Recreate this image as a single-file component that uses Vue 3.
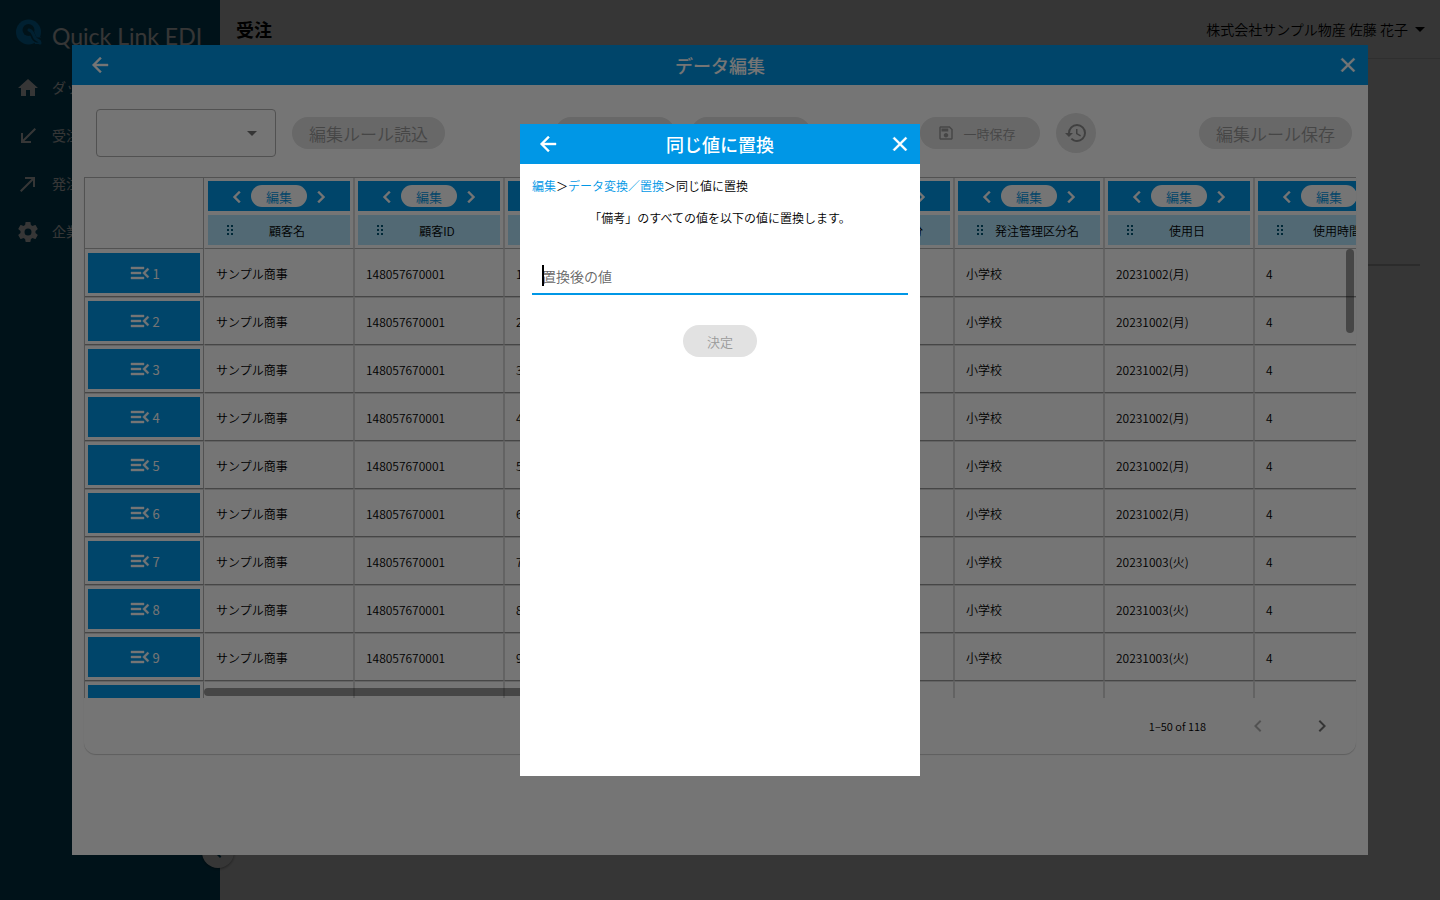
<script setup>
import { ref, computed, onMounted } from 'vue'

// サイドメニュー
const menuItems = [
  { label: 'ダッシュボード', icon: 'M10,20V14H14V20H19V12H22L12,3L2,12H5V20H10Z' },
  { label: '受注', icon: 'M20,5.41L18.59,4L7,15.59V9H5V19H15V17H8.41L20,5.41Z' },
  { label: '発注', icon: 'M9,5V7H15.59L4,18.59L5.41,20L17,8.41V15H19V5H9Z' },
  {
    label: '企業設定',
    icon: 'M12,15.5A3.5,3.5 0 0,1 8.5,12A3.5,3.5 0 0,1 12,8.5A3.5,3.5 0 0,1 15.5,12A3.5,3.5 0 0,1 12,15.5M19.43,12.97C19.47,12.65 19.5,12.33 19.5,12C19.5,11.67 19.47,11.34 19.43,11L21.54,9.37C21.73,9.22 21.78,8.95 21.66,8.73L19.66,5.27C19.54,5.05 19.27,4.96 19.05,5.05L16.56,6.05C16.04,5.66 15.5,5.32 14.87,5.07L14.5,2.42C14.46,2.18 14.25,2 14,2H10C9.75,2 9.54,2.18 9.5,2.42L9.13,5.07C8.5,5.32 7.96,5.66 7.44,6.05L4.95,5.05C4.73,4.96 4.46,5.05 4.34,5.27L2.34,8.73C2.21,8.95 2.27,9.22 2.46,9.37L4.57,11C4.53,11.34 4.5,11.67 4.5,12C4.5,12.33 4.53,12.65 4.57,12.97L2.46,14.63C2.27,14.78 2.21,15.05 2.34,15.27L4.34,18.73C4.46,18.95 4.73,19.03 4.95,18.95L7.44,17.94C7.96,18.34 8.5,18.68 9.13,18.93L9.5,21.58C9.54,21.82 9.75,22 10,22H14C14.25,22 14.46,21.82 14.5,21.58L14.87,18.93C15.5,18.67 16.04,18.34 16.56,17.94L19.05,18.95C19.27,19.03 19.54,18.95 19.66,18.73L21.66,15.27C21.78,15.05 21.73,14.78 21.54,14.63L19.43,12.97Z'
  }
]

// アイコン
const icons = {
  back: 'M20,11V13H8L13.5,18.5L12.08,19.92L4.16,12L12.08,4.08L13.5,5.5L8,11H20Z',
  close: 'M19,6.41L17.59,5L12,10.59L6.41,5L5,6.41L10.59,12L5,17.59L6.41,19L12,13.41L17.59,19L19,17.59L13.41,12L19,6.41Z',
  left: 'M15.41,16.58L10.83,12L15.41,7.41L14,6L8,12L14,18L15.41,16.58Z',
  right: 'M8.59,16.58L13.17,12L8.59,7.41L10,6L16,12L10,18L8.59,16.58Z',
  down: 'M7,10L12,15L17,10H7Z',
  rowMenu: 'M21,15.61L19.59,17L14.58,12L19.59,7L21,8.39L17.44,12L21,15.61M3,6H16V8H3V6M3,13V11H13V13H3M3,18V16H16V18H3Z',
  save: 'M17 3H5C3.89 3 3 3.9 3 5V19C3 20.1 3.89 21 5 21H19C20.1 21 21 20.1 21 19V7L17 3M19 19H5V5H16.17L19 7.83V19M12 12C10.34 12 9 13.34 9 15S10.34 18 12 18 15 16.66 15 15 13.66 12 12 12M6 6H15V10H6V6Z',
  history: 'M13.5,8H12V13L16.28,15.54L17,14.33L13.5,12.25V8M13,3A9,9 0 0,0 4,12H1L4.96,16.03L9,12H6A7,7 0 0,1 13,5A7,7 0 0,1 20,12A7,7 0 0,1 13,19C11.07,19 9.32,18.21 8.06,16.94L6.64,18.36C8.27,20 10.5,21 13,21A9,9 0 0,0 22,12A9,9 0 0,0 13,3'
}

const columns = ['顧客名', '顧客ID', '明細番号', '備考', '発注管理区分', '発注管理区分名', '使用日', '使用時間']

// 表示する行
const rows = Array.from({ length: 10 }, (_, i) => ({
  no: i + 1,
  cells: ['サンプル商事', '148057670001', String(i + 1), '', '1', '小学校', i < 6 ? '20231002(月)' : '20231003(火)', '4']
}))

const selectedRule = ref('')
const replaceValue = ref('')
const replaceInput = ref(null)
const canSubmit = computed(() => replaceValue.value !== '')

onMounted(() => {
  replaceInput.value.focus()
})
</script>

<template>
  <div class="app">
    <!-- サイドバー -->
    <aside class="sidebar">
      <div class="brand">
        <svg class="brand-mark" viewBox="0 0 28 28">
          <circle class="mark-fill" cx="12.5" cy="14" r="12.5" />
          <path class="mark-fill" d="M17,20L25,19V26H19Z" />
          <circle class="mark-cut" cx="12.5" cy="12" r="6" />
          <path class="mark-cut-line" d="M14,13C18,15 16,21 21,22L27,22" />
          <path class="mark-line" d="M13,12C18,13 17,19 20,21C22,23 24,22 24,25" />
        </svg>
        <span class="brand-name">Quick Link EDI</span>
      </div>
      <nav class="menu">
        <a v-for="item in menuItems" :key="item.label" href="#" class="menu-link">
          <svg class="icon" viewBox="0 0 24 24"><path :d="item.icon" /></svg>
          <span class="menu-label">{{ item.label }}</span>
        </a>
      </nav>
      <button class="collapse-btn" aria-label="メニューを閉じる">
        <svg class="icon" viewBox="0 0 24 24"><path :d="icons.left" /></svg>
      </button>
    </aside>

    <main class="main">
      <header class="main-header">
        <h1 class="page-title">受注</h1>
        <button class="user-btn">
          株式会社サンプル物産 佐藤 花子
          <svg class="icon" viewBox="0 0 24 24"><path :d="icons.down" /></svg>
        </button>
      </header>
      <div class="main-body"></div>
    </main>
  </div>

  <!-- データ編集ダイアログ -->
  <div class="overlay">
    <section class="dialog edit-dialog">
      <header class="dialog-bar">
        <button class="bar-btn" aria-label="戻る">
          <svg class="icon bold" viewBox="0 0 24 24"><path :d="icons.back" /></svg>
        </button>
        <h2 class="dialog-title">データ編集</h2>
        <button class="bar-btn" aria-label="閉じる">
          <svg class="icon bold" viewBox="0 0 24 24"><path :d="icons.close" /></svg>
        </button>
      </header>

      <div class="toolbar">
        <div class="select-wrap">
          <select v-model="selectedRule" class="rule-select" aria-label="編集ルール">
            <option value=""></option>
          </select>
          <svg class="icon select-arrow" viewBox="0 0 24 24"><path :d="icons.down" /></svg>
        </div>
        <button class="pill large" disabled>編集ルール読込</button>
        <div class="tool-group">
          <div class="tool-pair">
            <button class="pill" disabled>元に戻す</button>
            <button class="pill" disabled>やり直す</button>
          </div>
          <div class="tool-pair">
            <button class="pill with-icon" disabled>
              <svg class="icon small" viewBox="0 0 24 24"><path :d="icons.save" /></svg>
              一時保存
            </button>
            <button class="history-btn" aria-label="履歴" disabled>
              <svg class="icon" viewBox="0 0 24 24"><path :d="icons.history" /></svg>
            </button>
          </div>
        </div>
        <button class="pill large" disabled>編集ルール保存</button>
      </div>

      <div class="table-card">
        <div class="table-scroll">
          <table class="grid">
            <thead>
              <tr>
                <th class="corner"></th>
                <th v-for="col in columns" :key="col">
                  <div class="col-tools">
                    <button class="col-btn" aria-label="左へ移動">
                      <svg class="icon bold" viewBox="0 0 24 24"><path :d="icons.left" /></svg>
                    </button>
                    <button class="col-edit">編集</button>
                    <button class="col-btn" aria-label="右へ移動">
                      <svg class="icon bold" viewBox="0 0 24 24"><path :d="icons.right" /></svg>
                    </button>
                  </div>
                  <div class="col-name">
                    <svg class="drag" viewBox="0 0 6 10">
                      <path d="M0,0h2v2h-2zM4,0h2v2h-2zM0,4h2v2h-2zM4,4h2v2h-2zM0,8h2v2h-2zM4,8h2v2h-2z" />
                    </svg>
                    <span class="col-label">{{ col }}</span>
                  </div>
                </th>
              </tr>
            </thead>
            <tbody>
              <tr v-for="row in rows" :key="row.no">
                <td class="row-head">
                  <button class="row-btn">
                    <svg class="icon bold" viewBox="0 0 24 24"><path :d="icons.rowMenu" /></svg>
                    {{ row.no }}
                  </button>
                </td>
                <td v-for="(cell, i) in row.cells" :key="i">{{ cell }}</td>
              </tr>
            </tbody>
          </table>
          <div class="thumb-v"></div>
          <div class="thumb-h"></div>
        </div>
        <footer class="pager">
          <span>1–50 of 118</span>
          <button class="page-btn" aria-label="前のページ" disabled>
            <svg class="icon" viewBox="0 0 24 24"><path :d="icons.left" /></svg>
          </button>
          <button class="page-btn" aria-label="次のページ">
            <svg class="icon" viewBox="0 0 24 24"><path :d="icons.right" /></svg>
          </button>
        </footer>
      </div>
    </section>
  </div>

  <!-- 同じ値に置換ダイアログ -->
  <div class="overlay">
    <section class="dialog replace-dialog">
      <header class="dialog-bar">
        <button class="bar-btn" aria-label="戻る">
          <svg class="icon bold" viewBox="0 0 24 24"><path :d="icons.back" /></svg>
        </button>
        <h2 class="dialog-title">同じ値に置換</h2>
        <button class="bar-btn" aria-label="閉じる">
          <svg class="icon bold" viewBox="0 0 24 24"><path :d="icons.close" /></svg>
        </button>
      </header>
      <form class="replace-form" @submit.prevent>
        <nav class="breadcrumb">
          <a href="#">編集</a><span>＞</span><a href="#">データ変換／置換</a><span>＞</span><span>同じ値に置換</span>
        </nav>
        <p class="message">「備考」のすべての値を以下の値に置換します。</p>
        <div class="input-wrap">
          <input
            ref="replaceInput"
            v-model="replaceValue"
            class="replace-input"
            type="text"
            placeholder="置換後の値"
            aria-label="置換後の値"
          />
          <span v-if="!replaceValue" class="caret"></span>
        </div>
        <button class="pill submit" :disabled="!canSubmit">決定</button>
      </form>
    </section>
  </div>
</template>

<style>
body {
  margin: 0;
  font-family: "Noto Sans CJK JP", sans-serif;
  font-weight: 350;
  overflow: hidden;
}
</style>

<style scoped>
* {
  box-sizing: border-box;
}

button {
  font-family: inherit;
  font-weight: inherit;
  border: none;
  padding: 0;
  background: none;
  color: inherit;
  cursor: pointer;
}

.icon {
  width: 24px;
  height: 24px;
  fill: currentColor;
  flex: none;
}

.icon.small {
  width: 18px;
  height: 18px;
}

.icon.bold {
  stroke: currentColor;
  stroke-width: 0.4;
}

.app {
  display: flex;
  min-height: 100vh;
  background: #ffffff;
}

.sidebar {
  position: relative;
  width: 220px;
  flex: none;
  background: #005778;
  color: #ffffff;
}

.brand {
  display: flex;
  align-items: flex-start;
  gap: 8px;
  padding: 18px 16px 0;
  height: 64px;
}

.brand-mark {
  width: 28px;
  height: 28px;
}

.mark-fill {
  fill: #0097e6;
}

.mark-cut {
  fill: #005778;
}

.mark-cut-line {
  fill: none;
  stroke: #005778;
  stroke-width: 5;
}

.mark-line {
  fill: none;
  stroke: #0097e6;
  stroke-width: 3;
  stroke-linecap: round;
}

.brand-name {
  font-family: Lato, sans-serif;
  font-size: 23px;
  font-weight: 400;
  line-height: 36px;
  white-space: nowrap;
}

.menu-link {
  display: flex;
  align-items: center;
  gap: 12px;
  height: 48px;
  padding: 0 16px;
  color: #ffffff;
  font-size: 14px;
  font-weight: 400;
  text-decoration: none;
}

.menu-label {
  padding-bottom: 2px;
}

.collapse-btn {
  position: absolute;
  right: -14px;
  bottom: 32px;
  width: 32px;
  height: 32px;
  display: flex;
  align-items: center;
  justify-content: center;
  border-radius: 50%;
  background: #ffffff;
  color: #005778;
  box-shadow: 0 1px 3px rgba(0, 0, 0, 0.4);
}

.main {
  flex: 1;
}

.main-header {
  display: flex;
  align-items: center;
  justify-content: space-between;
  height: 59px;
  padding: 0 8px 0 16px;
  border-bottom: 1px solid #dddddd;
}

.page-title {
  margin: 0;
  font-size: 18px;
  font-weight: 700;
}

.user-btn {
  display: flex;
  align-items: center;
  font-size: 14px;
}

.main-body {
  height: 207px;
  margin: 0 20px;
  border-bottom: 2px solid #cccccc;
}

/* ダイアログ共通 */
.overlay {
  position: fixed;
  inset: 0;
  display: flex;
  align-items: center;
  justify-content: center;
  background: rgba(0, 0, 0, 0.54);
}

.dialog {
  display: flex;
  flex-direction: column;
  background: #ffffff;
}

.dialog-bar {
  display: flex;
  align-items: center;
  height: 40px;
  flex: none;
  padding-left: 8px;
  background: #0097e6;
  color: #ffffff;
}

.bar-btn {
  display: flex;
  justify-content: center;
  width: 40px;
}

.dialog-title {
  flex: 1;
  margin: 0;
  padding-right: 8px;
  font-size: 18px;
  font-weight: 500;
  text-align: center;
}

.edit-dialog {
  width: 90%;
  height: 90%;
}

/* ツールバー */
.toolbar {
  display: flex;
  align-items: center;
  gap: 16px;
  padding: 24px 16px 20px 24px;
}

.select-wrap {
  position: relative;
  width: 180px;
  height: 48px;
}

.rule-select {
  width: 100%;
  height: 100%;
  padding: 0 12px;
  border: 1px solid #b0b0b0;
  border-radius: 4px;
  background: transparent;
  appearance: none;
}

.select-arrow {
  position: absolute;
  top: 12px;
  right: 12px;
  color: #757575;
  pointer-events: none;
}

.pill {
  display: flex;
  align-items: center;
  justify-content: center;
  gap: 8px;
  width: 120px;
  height: 32px;
  border-radius: 16px;
  background: #0097e6;
  color: #ffffff;
  font-size: 13px;
}

.pill.large {
  width: auto;
  padding: 0 17px;
  font-size: 17px;
}

.pill.with-icon {
  padding-right: 6px;
}

.pill:disabled,
.history-btn:disabled {
  background: #e2e2e2;
  color: #9a9a9a;
  cursor: default;
}

.history-btn:disabled {
  color: #8c8c8c;
}

.tool-group {
  flex: 1;
  display: flex;
  justify-content: center;
  gap: 109px;
  padding-left: 6px;
}

.tool-pair {
  display: flex;
  align-items: center;
  gap: 16px;
}

.history-btn {
  display: flex;
  align-items: center;
  justify-content: center;
  width: 40px;
  height: 40px;
  border-radius: 50%;
}

/* テーブル */
.table-card {
  margin: 0 12px 101px;
  flex: 1;
  min-height: 0;
  display: flex;
  flex-direction: column;
  border-radius: 0 0 12px 12px;
  box-shadow: 0 1px 1px rgba(0, 0, 0, 0.2);
}

.table-scroll {
  position: relative;
  flex: 1;
  min-height: 0;
  overflow: hidden;
}

.grid {
  width: 1320px;
  table-layout: fixed;
  border-collapse: separate;
  border-spacing: 0;
  border-top: 1px solid #b4b4b4;
  border-left: 1px solid #b4b4b4;
  font-size: 12px;
}

.grid th {
  width: 150px;
  height: 71px;
  padding: 3px;
  border-left: 1px solid #d8d8d8;
  border-right: 1px solid #d8d8d8;
  border-bottom: 1px solid #b4b4b4;
  font-weight: inherit;
}

.grid td {
  height: 48px;
  padding: 2px 11px 0;
  border-left: 1px solid #d8d8d8;
  border-right: 1px solid #d8d8d8;
  border-bottom: 1px solid #999999;
}

.grid tr + tr td {
  padding-top: 0;
  border-top: 1px solid #d8d8d8;
}

.grid .corner,
.grid .row-head {
  width: 119px;
  border-left: none;
  border-right: 1px solid #b4b4b4;
}

.grid .corner + th,
.grid .row-head + td {
  border-left-color: transparent;
}

.grid .row-head {
  padding: 4px 3px 3px;
}

.grid tr + tr .row-head {
  padding-top: 3px;
}

.col-tools,
.col-name {
  display: flex;
  align-items: center;
  height: 30px;
}

.col-tools {
  justify-content: center;
  gap: 2px;
  margin-bottom: 4px;
  background: #0097e6;
  color: #ffffff;
}

.col-btn {
  display: flex;
  padding-top: 2px;
}

.col-edit {
  width: 56px;
  height: 22px;
  padding-top: 1px;
  border-radius: 11px;
  background: #ffffff;
  color: #0097e6;
  font-size: 13px;
  line-height: 21px;
}

.col-name {
  padding-left: 19px;
  background: #b3e5fc;
}

.drag {
  width: 6px;
  height: 10px;
  fill: #005778;
}

.col-label {
  flex: 1;
  padding-right: 9px;
  white-space: nowrap;
  text-align: center;
}

.row-btn {
  display: flex;
  align-items: center;
  justify-content: center;
  width: 100%;
  height: 40px;
  background: #0097e6;
  color: #ffffff;
  font-size: 13px;
  font-weight: 400;
}

.thumb-v,
.thumb-h {
  position: absolute;
  border-radius: 4px;
  background: rgba(0, 0, 0, 0.4);
}

.thumb-v {
  top: 72px;
  right: 2px;
  width: 8px;
  height: 84px;
}

.thumb-h {
  left: 120px;
  bottom: 2px;
  width: 560px;
  height: 8px;
}

.pager {
  display: flex;
  align-items: center;
  justify-content: flex-end;
  gap: 40px;
  height: 56px;
  padding-right: 22px;
  font-size: 11px;
}

.page-btn {
  display: flex;
  color: #757575;
}

.page-btn:disabled {
  color: #b4b4b4;
}

/* 置換ダイアログ */
.replace-dialog {
  width: 400px;
  height: 652px;
}

.replace-form {
  display: flex;
  flex-direction: column;
  padding: 12px;
}

.breadcrumb {
  font-size: 12px;
  line-height: 20px;
}

.breadcrumb a {
  color: #0097e6;
  text-decoration: none;
}

.message {
  margin: 12px 0 32px;
  font-size: 12px;
  line-height: 20px;
  text-align: center;
}

.input-wrap {
  position: relative;
  display: flex;
}

.replace-input {
  width: 100%;
  height: 35px;
  padding: 0 10px 2px;
  border: none;
  border-bottom: 2px solid #0097e6;
  outline: none;
  font-family: inherit;
  font-size: 14px;
  font-weight: inherit;
  caret-color: transparent;
}

.replace-input::placeholder {
  color: #666666;
}

.caret {
  position: absolute;
  top: 5px;
  left: 10px;
  width: 2px;
  height: 21px;
  background: #000000;
}

.submit {
  width: 74px;
  margin: 30px auto 0;
}
</style>
